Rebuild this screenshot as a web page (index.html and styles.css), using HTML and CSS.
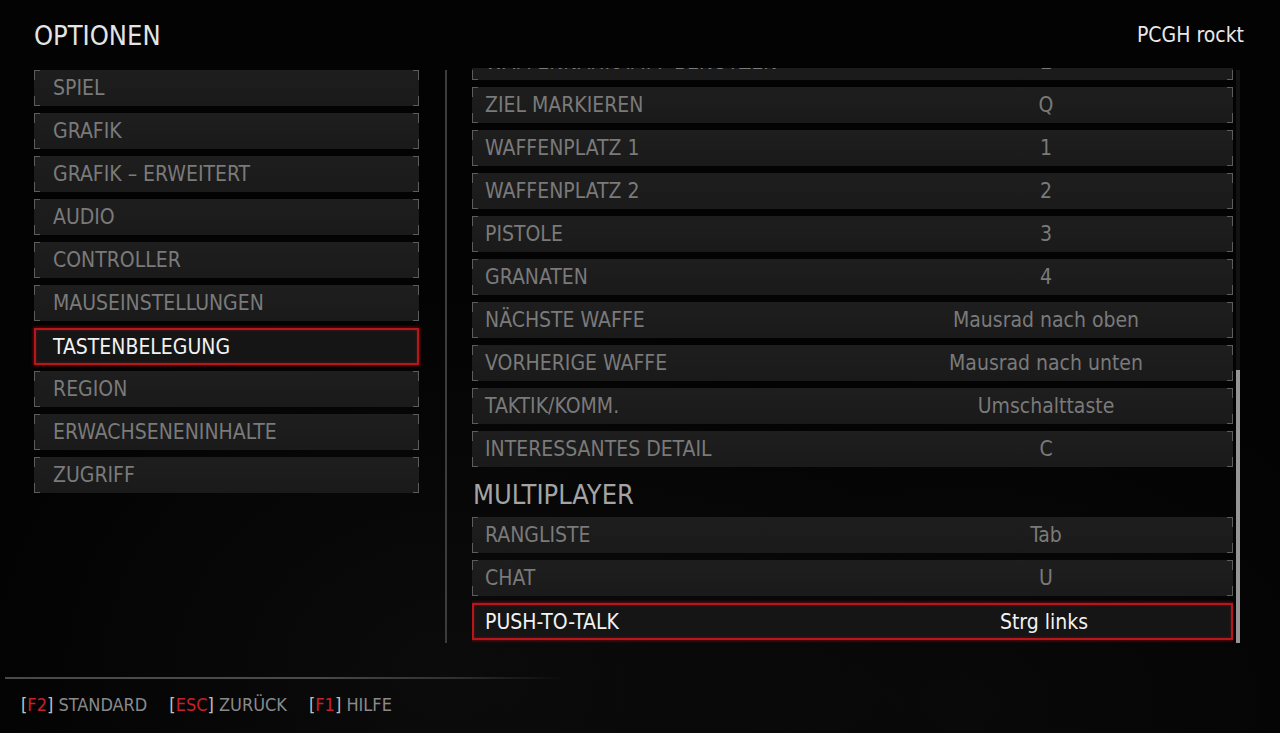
FILE: index.html
```html
<!DOCTYPE html>
<html lang="de">
<head>
<meta charset="utf-8">
<title>Optionen</title>
<link rel="stylesheet" href="styles.css">
</head>
<body>
<div class="screen">
  <header class="header">
    <h1 class="title">OPTIONEN</h1>
    <div class="user">PCGH rockt</div>
  </header>
  <main class="main">
    <nav class="menu">
      <div class="item">SPIEL</div>
      <div class="item">GRAFIK</div>
      <div class="item">GRAFIK – ERWEITERT</div>
      <div class="item">AUDIO</div>
      <div class="item">CONTROLLER</div>
      <div class="item">MAUSEINSTELLUNGEN</div>
      <div class="item selected">TASTENBELEGUNG</div>
      <div class="item">REGION</div>
      <div class="item">ERWACHSENENINHALTE</div>
      <div class="item">ZUGRIFF</div>
    </nav>
    <div class="divider"></div>
    <section class="bindings">
      <div class="bindings-inner">
        <div class="row"><span class="label">WAFFENNAHKAMPF BENUTZEN</span><span class="value">E</span></div>
        <div class="row"><span class="label">ZIEL MARKIEREN</span><span class="value">Q</span></div>
        <div class="row"><span class="label">WAFFENPLATZ 1</span><span class="value">1</span></div>
        <div class="row"><span class="label">WAFFENPLATZ 2</span><span class="value">2</span></div>
        <div class="row"><span class="label">PISTOLE</span><span class="value">3</span></div>
        <div class="row"><span class="label">GRANATEN</span><span class="value">4</span></div>
        <div class="row"><span class="label">NÄCHSTE WAFFE</span><span class="value">Mausrad nach oben</span></div>
        <div class="row"><span class="label">VORHERIGE WAFFE</span><span class="value">Mausrad nach unten</span></div>
        <div class="row"><span class="label">TAKTIK/KOMM.</span><span class="value">Umschalttaste</span></div>
        <div class="row"><span class="label">INTERESSANTES DETAIL</span><span class="value">C</span></div>
        <h2 class="section">MULTIPLAYER</h2>
        <div class="row"><span class="label">RANGLISTE</span><span class="value">Tab</span></div>
        <div class="row"><span class="label">CHAT</span><span class="value">U</span></div>
        <div class="row selected"><span class="label">PUSH-TO-TALK</span><span class="value">Strg links</span></div>
      </div>
    </section>
    <div class="scrollbar"><div class="thumb"></div></div>
  </main>
  <footer class="footer">
    <div class="footer-line"></div>
    <div class="hints">
      <span class="hint"><span class="br">[</span><span class="key">F2</span><span class="br">]</span> STANDARD</span>
      <span class="hint"><span class="br">[</span><span class="key">ESC</span><span class="br">]</span> ZURÜCK</span>
      <span class="hint"><span class="br">[</span><span class="key">F1</span><span class="br">]</span> HILFE</span>
    </div>
  </footer>
</div>
</body>
</html>
```

FILE: styles.css
```css
html, body {
  margin: 0;
  padding: 0;
  background: #020202;
}

body {
  font-family: "DejaVu Sans Condensed", "DejaVu Sans", sans-serif;
  font-stretch: condensed;
  color: #7c7c7c;
}

.screen {
  width: 1280px;
  height: 733px;
  overflow: hidden;
  display: flex;
  flex-direction: column;
  background:
    radial-gradient(ellipse at 35% 92%, rgba(30,30,30,0.3), rgba(0,0,0,0) 40%),
    radial-gradient(ellipse at 75% 96%, rgba(26,26,26,0.25), rgba(0,0,0,0) 35%),
    #030303;
}

.header {
  height: 68px;
  display: flex;
  align-items: center;
  justify-content: space-between;
  padding: 0 36px 0 34px;
  box-sizing: border-box;
}

.title {
  margin: 0;
  font-weight: normal;
  font-size: 27px;
  color: #e4e4e4;
  position: relative;
  top: 1px;
}

.user {
  font-size: 21px;
  color: #e8e8e8;
  position: relative;
  top: 1px;
}

.main {
  height: 575px;
  display: flex;
}

.menu {
  width: 385px;
  margin-left: 34px;
  padding-top: 2px;
  display: flex;
  flex-direction: column;
  gap: 7px;
}

.item, .row {
  height: 36px;
  box-sizing: border-box;
  display: flex;
  align-items: center;
  font-size: 21px;
  color: #7a7a7a;
  background:
    linear-gradient(#5c5c5c, #5c5c5c) left top / 6px 1px no-repeat,
    linear-gradient(#5c5c5c, #5c5c5c) left top / 1px 10px no-repeat,
    linear-gradient(#5c5c5c, #5c5c5c) left bottom / 6px 1px no-repeat,
    linear-gradient(#5c5c5c, #5c5c5c) left bottom / 1px 10px no-repeat,
    linear-gradient(#5c5c5c, #5c5c5c) right top / 6px 1px no-repeat,
    linear-gradient(#5c5c5c, #5c5c5c) right top / 1px 10px no-repeat,
    linear-gradient(#5c5c5c, #5c5c5c) right bottom / 6px 1px no-repeat,
    linear-gradient(#5c5c5c, #5c5c5c) right bottom / 1px 10px no-repeat,
    linear-gradient(#1e1e1e, #1a1a1a);
}

.item {
  padding-left: 19px;
}

.item.selected, .row.selected {
  background: #151515;
  border: 2px solid #b8161b;
  box-shadow: 0 0 3px 1px rgba(170, 15, 20, 0.55), inset 0 0 3px rgba(190, 20, 25, 0.4);
  color: #f2f2f2;
  height: 37px;
  margin-bottom: -1px;
}

.item.selected {
  padding-left: 17px;
}

.divider {
  width: 2px;
  margin-left: 26px;
  margin-top: 2px;
  background: #3c3c3c;
}

.bindings {
  width: 761px;
  margin-left: 25px;
  overflow: hidden;
}

.bindings-inner {
  margin-top: -24px;
  display: flex;
  flex-direction: column;
  gap: 7px;
}

.row {
  padding-left: 13px;
}

.row.selected {
  padding-left: 11px;
}

.label {
  flex: 1;
}

.value {
  width: 374px;
  text-align: center;
  font-size: 21px;
}

.section {
  height: 36px;
  margin: 0;
  display: flex;
  align-items: center;
  font-weight: normal;
  font-size: 27px;
  color: #a4a4a4;
  padding-left: 1px;
  position: relative;
  top: 2px;
}

.scrollbar {
  width: 4px;
  margin-left: 3px;
  margin-top: 2px;
  display: flex;
  flex-direction: column;
  justify-content: flex-end;
  background: #121212;
}

.thumb {
  height: 273px;
  background: #959595;
}

.footer {
  flex: 1;
  display: flex;
  flex-direction: column;
}

.footer-line {
  margin-top: 34px;
  margin-left: 5px;
  width: 560px;
  height: 2px;
  background: linear-gradient(to right, #4a4a4a 0%, #4a4a4a 55%, rgba(74,74,74,0.6) 80%, rgba(74,74,74,0) 100%);
}

.hints {
  margin-top: 15px;
  margin-left: 21px;
  display: flex;
  gap: 22px;
  font-size: 18px;
  color: #8a8a8a;
}

.br {
  color: #c2c2c2;
}

.key {
  color: #c8202a;
}
```
